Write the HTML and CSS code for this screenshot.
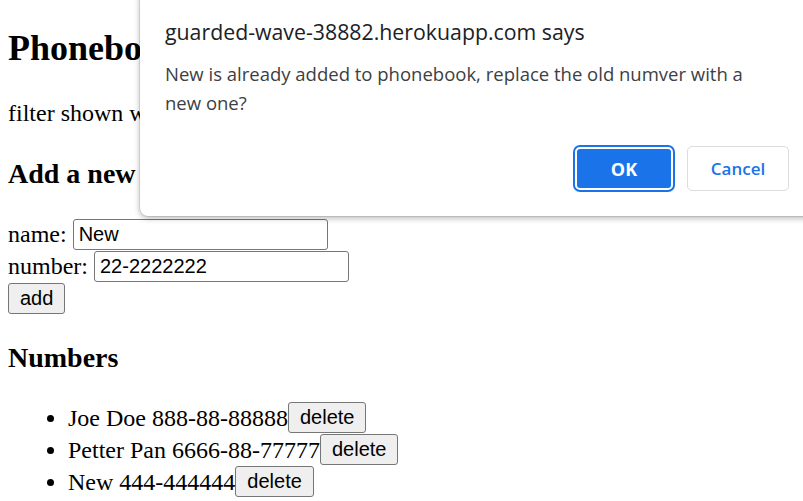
FILE: index.html
```html
<!DOCTYPE html>
<html lang="en">
<head>
<meta charset="utf-8">
<title>Phonebook</title>
<link rel="stylesheet" href="styles.css">
</head>
<body>
  <div class="app">
    <h2 class="title">Phonebook</h2>
    <div class="filter">
      <span>filter shown with</span>
      <input class="field" type="text" value="">
    </div>
    <h3 class="subtitle">Add a new</h3>
    <form class="form">
      <div class="row"><span>name:</span><input class="field" type="text" value="New"></div>
      <div class="row"><span>number:</span><input class="field" type="text" value="22-2222222"></div>
      <div class="row"><button class="btn" type="button">add</button></div>
    </form>
    <h3 class="subtitle numbers-title">Numbers</h3>
    <ul class="list">
      <li class="item">Joe Doe 888-88-88888<button class="btn btn-inline" type="button">delete</button></li>
      <li class="item">Petter Pan 6666-88-77777<button class="btn btn-inline" type="button">delete</button></li>
      <li class="item">New 444-444444<button class="btn btn-inline" type="button">delete</button></li>
    </ul>
  </div>

  <div class="dialog" role="dialog">
    <div class="dialog-title">guarded-wave-38882.herokuapp.com says</div>
    <div class="dialog-msg">New is already added to phonebook, replace the old numver with a new one?</div>
    <div class="dialog-actions">
      <button class="dbtn ok" type="button">OK</button>
      <button class="dbtn cancel" type="button">Cancel</button>
    </div>
  </div>
</body>
</html>
```

FILE: styles.css
```css
html, body {
  margin: 0;
  padding: 0;
  background: #ffffff;
  overflow: hidden;
}

body {
  font-family: "Liberation Serif", "Times New Roman", serif;
  font-size: 24px;
  color: #000;
}

.app {
  padding: 0 8px;
}

.title {
  font-size: 36px;
  line-height: 40px;
  margin: 28px 0 0;
  font-weight: bold;
}

.filter {
  margin-top: 29px;
  height: 32px;
  line-height: 32px;
  display: flex;
  align-items: center;
  gap: 7px;
  white-space: nowrap;
}

.subtitle {
  font-size: 28px;
  line-height: 32px;
  margin: 29px 0 0;
  font-weight: bold;
}

.form {
  margin-top: 28px;
}

.row {
  display: flex;
  align-items: center;
  gap: 6px;
  height: 32px;
  line-height: 32px;
}

.field {
  box-sizing: border-box;
  width: 255px;
  height: 31px;
  border: 1px solid #767676;
  border-radius: 3px;
  padding: 0 5px;
  font-family: "Liberation Sans", Arial, sans-serif;
  font-size: 20px;
  color: #000;
  background: #fff;
  margin: 0;
}

.btn {
  box-sizing: border-box;
  height: 31px;
  padding: 0 11px;
  border: 1px solid #767676;
  border-radius: 3px;
  background: #efefef;
  font-family: "Liberation Sans", Arial, sans-serif;
  font-size: 20px;
  line-height: normal;
  color: #000;
  margin: 0;
}

.btn-inline {
  vertical-align: top;
}

.numbers-title {
  margin-top: 27.5px;
}

.list {
  margin: 28px 0 0;
  padding-left: 60px;
}

.item {
  height: 32px;
  line-height: 32px;
  white-space: nowrap;
}

/* Browser confirm dialog overlay */
.dialog {
  position: absolute;
  left: 140px;
  right: -12px;
  top: -10px;
  box-sizing: border-box;
  padding: 28px 26px 25px 25px;
  background: #fff;
  border-radius: 8px;
  box-shadow: 0 0 0 1px rgba(0, 0, 0, 0.08), 0 2px 6px rgba(0, 0, 0, 0.3);
  font-family: "Open Sans", "Noto Sans", sans-serif;
}

.dialog-title {
  font-size: 21.3px;
  line-height: 28px;
  color: #202124;
  white-space: nowrap;
}

.dialog-msg {
  margin-top: 13px;
  font-size: 18.5px;
  line-height: 29px;
  color: #3c4043;
  width: 600px;
}

.dialog-actions {
  margin-top: 29px;
  display: flex;
  justify-content: flex-end;
  align-items: center;
  gap: 14px;
}

.dbtn {
  box-sizing: border-box;
  width: 102px;
  height: 45px;
  border-radius: 5px;
  font-family: "Open Sans", "Noto Sans", sans-serif;
  font-size: 17px;
  font-weight: 600;
  line-height: normal;
  margin: 0;
  padding: 0;
}

.ok {
  width: 98px;
  height: 43px;
  background: #1a73e8;
  color: #fff;
  border: 2px solid #fff;
  box-shadow: 0 0 0 2px #1a73e8;
  font-size: 18px;
  font-weight: 700;
}

.cancel {
  background: #fff;
  color: #1a73e8;
  border: 1px solid #dadce0;
}
```
